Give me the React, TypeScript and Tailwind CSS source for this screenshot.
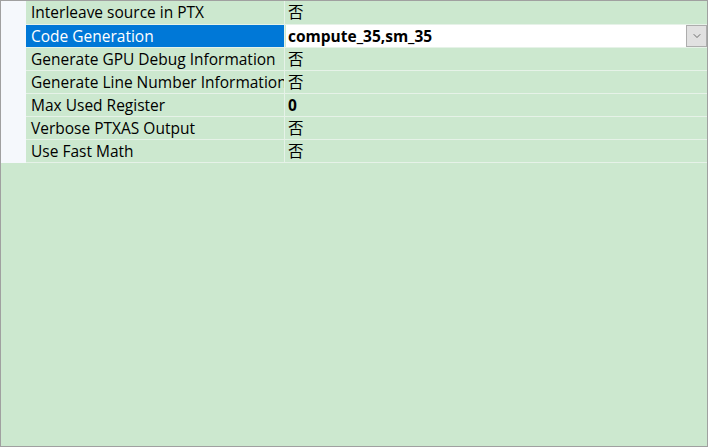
import { ChevronDown } from 'lucide-react';

const rows = [
  { name: 'Interleave source in PTX', value: '否', bold: false },
  { name: 'Code Generation', value: 'compute_35,sm_35', bold: true, selected: true },
  { name: 'Generate GPU Debug Information', value: '否', bold: false },
  { name: 'Generate Line Number Information', value: '否', bold: false },
  { name: 'Max Used Register', value: '0', bold: true },
  { name: 'Verbose PTXAS Output', value: '否', bold: false },
  { name: 'Use Fast Math', value: '否', bold: false },
];

export default function App() {
  return (
    <div
      className="w-[708px] h-[447px] border border-[#a0a0a0] bg-[#cce8cf] overflow-hidden text-[15.5px] text-black"
      style={{ fontFamily: '"Open Sans", "Noto Sans CJK SC", sans-serif' }}
    >
      <div className="flex flex-col">
        {rows.map((row, i) => (
          <div
            key={row.name}
            className={`flex border-b border-[#e6f2e8] ${i === 0 ? 'h-[24px]' : 'h-[23px]'}`}
          >
            {/* left margin strip */}
            <div className="w-[25px] shrink-0 bg-[#f5f8fc] -mb-px" />
            <div
              className={`w-[258px] shrink-0 pl-[5px] pt-px flex items-center whitespace-nowrap overflow-hidden ${
                row.selected ? 'bg-[#0078d7] text-white' : ''
              }`}
            >
              {row.name}
            </div>
            <div className="w-px shrink-0 bg-[#e6f2e8]" />
            {row.selected ? (
              <div className="flex-1 flex items-center bg-white ml-px">
                <span className="flex-1 pl-[2px] pt-px font-bold whitespace-nowrap">{row.value}</span>
                <div className="w-[21px] h-full bg-[#e1e1e1] border border-[#adadad] flex items-center justify-center">
                  <ChevronDown className="w-[12px] h-[12px] text-[#444]" strokeWidth={1.5} />
                </div>
              </div>
            ) : (
              <div className={`flex-1 pl-[3px] pt-px flex items-center whitespace-nowrap ${row.bold ? 'font-bold' : ''}`}>
                {row.value}
              </div>
            )}
          </div>
        ))}
      </div>
    </div>
  );
}
